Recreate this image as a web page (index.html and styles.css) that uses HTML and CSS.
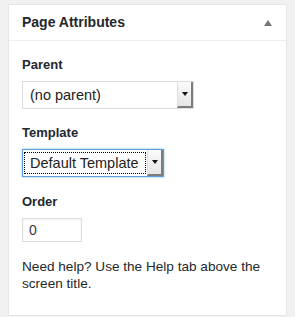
FILE: index.html
```html
<!DOCTYPE html>
<html lang="en">
<head>
  <meta charset="UTF-8" />
  <title>Page Attributes</title>
  <link rel="stylesheet" href="styles.css">
</head>
<body>
  <div class="postbox">
    <div class="postbox-header">
      <h2>Page Attributes</h2>
      <svg class="toggle" width="8" height="6" viewBox="0 0 8 6"><polygon points="4,0 8,6 0,6" fill="#72777c"/></svg>
    </div>

    <div class="inside">
      <p class="label">Parent</p>
      <div class="select parent">
        <span class="value">(no parent)</span>
        <span class="arrow"><svg width="6" height="4" viewBox="0 0 6 4"><polygon points="0,0 6,0 3,4" fill="#111"/></svg></span>
      </div>

      <p class="label">Template</p>
      <div class="select template focused">
        <span class="value">Default Template</span>
        <span class="arrow"><svg width="6" height="4" viewBox="0 0 6 4"><polygon points="0,0 6,0 3,4" fill="#111"/></svg></span>
      </div>

      <p class="label order-label">Order</p>
      <div class="order">0</div>

      <p class="help">Need help? Use the Help tab above the screen title.</p>
    </div>
  </div>
</body>
</html>
```

FILE: styles.css
```css
* { margin: 0; padding: 0; box-sizing: border-box; }

body {
  background: #f1f1f1;
  margin: 4px 8px;
  font-family: "Liberation Sans", Arial, sans-serif;
  font-size: 13px;
  color: #23282d;
}

.postbox {
  background: #fff;
  border: 1px solid #e5e5e5;
  box-shadow: 0 1px 1px rgba(0,0,0,0.04);
}

.postbox-header {
  display: flex;
  justify-content: space-between;
  align-items: center;
  padding: 8px 14px 8px 13px;
  border-bottom: 1px solid #eee;
}

.postbox-header h2 {
  font-size: 14px;
  font-weight: bold;
  line-height: 19px;
  color: #23282d;
}

.toggle { display: block; margin-top: 1px; }

.inside {
  padding: 15px 13px 23px;
}

.label {
  font-weight: bold;
  line-height: 18px;
  margin-bottom: 7px;
}

.select {
  display: flex;
  align-items: stretch;
  height: 28px;
  border: 1px solid #ddd;
  background: #fff;
  font-size: 14.5px;
  color: #222;
  margin-bottom: 15px;
}

.select.parent { width: 172px; }
.select.template { width: 142px; margin-bottom: 16px; }

.select .value {
  flex: 1;
  display: flex;
  align-items: center;
  padding-left: 7px;
  white-space: nowrap;
}

.select.focused {
  border-color: #5b9dd9;
  box-shadow: 0 0 2px rgba(30,140,190,0.6);
}

.select.focused .value {
  margin: 2px 1px 2px 1px;
  padding-left: 5px;
  border: 1px dotted #000;
}

.select .arrow {
  width: 16px;
  display: flex;
  align-items: center;
  justify-content: center;
  background: linear-gradient(#fafafa, #e6e6e6);
  border-right: 2px solid #7c7c7c;
  border-bottom: 2px solid #7c7c7c;
  border-left: 1px solid #ddd;
}

.select .arrow svg { display: block; }

.order {
  width: 60px;
  height: 24px;
  border: 1px solid #ddd;
  box-shadow: inset 0 1px 2px rgba(0,0,0,0.07);
  font-size: 14px;
  line-height: 22px;
  padding-left: 6px;
  color: #32373c;
  margin-bottom: 16px;
}

.help {
  font-size: 13.6px;
  line-height: 17px;
}
```
